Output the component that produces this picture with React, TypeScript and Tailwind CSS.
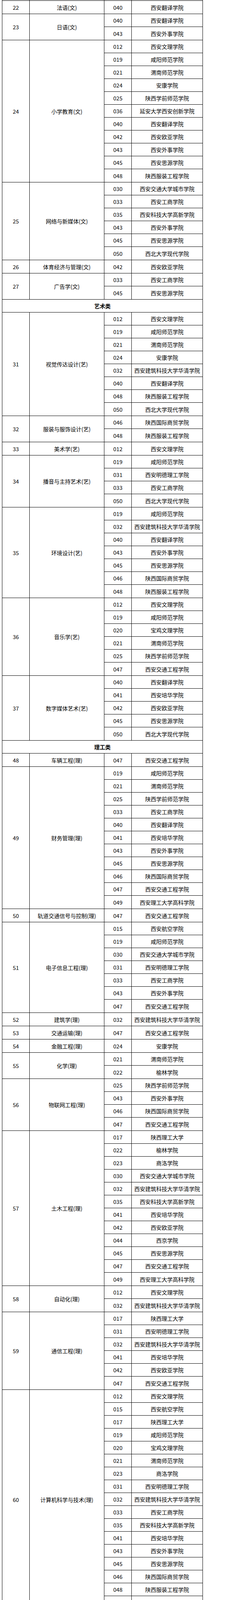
import React from 'react'

type Group = { no?: string; name?: string; schools: [string, string][] }
type Item = Group | { section: string }

const S: Record<string, string> = {
  '012': '西安文理学院',
  '015': '西安航空学院',
  '017': '陕西理工大学',
  '019': '咸阳师范学院',
  '020': '宝鸡文理学院',
  '021': '渭南师范学院',
  '022': '榆林学院',
  '023': '商洛学院',
  '024': '安康学院',
  '025': '陕西学前师范学院',
  '030': '西安交通大学城市学院',
  '031': '西安明德理工学院',
  '032': '西安建筑科技大学华清学院',
  '033': '西安工商学院',
  '035': '西安科技大学高新学院',
  '036': '延安大学西安创新学院',
  '040': '西安翻译学院',
  '041': '西安培华学院',
  '042': '西安欧亚学院',
  '043': '西安外事学院',
  '044': '西京学院',
  '045': '西安思源学院',
  '046': '陕西国际商贸学院',
  '047': '西安交通工程学院',
  '048': '陕西服装工程学院',
  '049': '西安理工大学高科学院',
  '050': '西北大学现代学院',
}

const g = (no: string, name: string, codes: string): Group => ({
  no,
  name,
  schools: codes.split(' ').map((c) => [c, S[c]] as [string, string]),
})

const items: Item[] = [
  g('22', '法语(文)', '040'),
  g('23', '日语(文)', '040 043'),
  g('24', '小学教育(文)', '012 019 021 024 025 036 040 042 043 045 048'),
  g('25', '网络与新媒体(文)', '030 033 035 043 045 050'),
  g('26', '体育经济与管理(文)', '042'),
  g('27', '广告学(文)', '033 045'),
  { section: '艺术类' },
  g('31', '视觉传达设计(艺)', '012 019 021 024 032 040 048 050'),
  g('32', '服装与服饰设计(艺)', '046 048'),
  g('33', '美术学(艺)', '012'),
  g('34', '播音与主持艺术(艺)', '019 031 033 050'),
  g('35', '环境设计(艺)', '019 032 040 043 045 046 048'),
  g('36', '音乐学(艺)', '012 019 020 021 025 047'),
  g('37', '数字媒体艺术(艺)', '040 041 042 045 050'),
  { section: '理工类' },
  g('48', '车辆工程(理)', '047'),
  g('49', '财务管理(理)', '019 021 025 033 040 041 043 045 046 047 049'),
  g('50', '轨道交通信号与控制(理)', '047'),
  g('51', '电子信息工程(理)', '015 019 030 031 033 043 047'),
  g('52', '建筑学(理)', '032'),
  g('53', '交通运输(理)', '047'),
  g('54', '金融工程(理)', '024'),
  g('55', '化学(理)', '021 022'),
  g('56', '物联网工程(理)', '025 043 046 047'),
  g('57', '土木工程(理)', '017 022 023 030 032 035 041 042 044 045 047 049'),
  g('58', '自动化(理)', '012 032'),
  g('59', '通信工程(理)', '017 031 032 041 042 047'),
  g('60', '计算机科学与技术(理)', '012 015 017 019 020 021 023 031 032 033 035 041 043 045 046 048 049'),
  g('61', '工程管理(理)', '017 023 024 032 042 044 049'),
]

// next group: only its first rows are on screen
const tail: [string, string][] = [
  ['012', S['012']],
  ['015', S['015']],
]

function SchoolRow({ code, school }: { code: string; school: string }) {
  return (
    <div className="flex h-[33px] border-b border-black last:border-b-0">
      <div className="w-[70px] shrink-0 border-r border-black flex items-center justify-center leading-none">
        {code}
      </div>
      <div className="flex-1 flex items-center justify-center whitespace-nowrap leading-none">
        {school}
      </div>
    </div>
  )
}

function GroupRow({ group }: { group: Group }) {
  return (
    <div className="flex border-b border-black">
      <div className="w-[70px] shrink-0 border-r border-black flex items-center justify-center leading-none">
        {group.no}
      </div>
      <div className="w-[191px] shrink-0 border-r border-black flex items-center justify-center leading-none">
        {group.name}
      </div>
      <div className="flex-1 flex flex-col">
        {group.schools.map(([code, school], i) => (
          <SchoolRow key={i} code={code} school={school} />
        ))}
      </div>
    </div>
  )
}

export default function App() {
  return (
    <div
      className="w-[596px] bg-white text-[14px] text-black"
      style={{ fontFamily: '"Noto Sans CJK SC", "Microsoft YaHei", sans-serif' }}
    >
      <div className="ml-[5px] w-[514px] border-l border-r border-black">
        {/* sliver of the row above */}
        <div className="flex h-[1px]">
          <div className="w-[70px] border-r border-black" />
          <div className="w-[191px] border-r border-black" />
          <div className="w-[70px] border-r border-black" />
        </div>
        <div className="border-t border-black">
          {items.map((item, i) =>
            'section' in item ? (
              <div
                key={i}
                className="h-[33px] border-b border-black flex items-center justify-center font-bold leading-none"
              >
                {item.section}
              </div>
            ) : (
              <GroupRow key={i} group={item} />
            )
          )}
          <div className="flex">
            <div className="w-[70px] shrink-0 border-r border-black" />
            <div className="w-[191px] shrink-0 border-r border-black" />
            <div className="flex-1 flex flex-col">
              {tail.map(([code, school], i) => (
                <div key={i} className="flex h-[33px] border-b border-black">
                  <div className="w-[70px] shrink-0 border-r border-black flex items-center justify-center leading-none">
                    {code}
                  </div>
                  <div className="flex-1 flex items-center justify-center whitespace-nowrap leading-none">
                    {school}
                  </div>
                </div>
              ))}
              {/* row cut by the bottom edge */}
              <div className="flex h-[17px] overflow-hidden">
                <div className="w-[70px] shrink-0 border-r border-black flex justify-center pt-[10px] leading-none">
                  017
                </div>
                <div className="flex-1 flex justify-center pt-[10px] whitespace-nowrap leading-none">
                  {S['017']}
                </div>
              </div>
            </div>
          </div>
        </div>
      </div>
      <div className="h-[3px] flex">
        <div className="w-[84px] bg-[#f7b585]" />
        <div className="flex-1 bg-[#e4e4e4]" />
      </div>
    </div>
  )
}
